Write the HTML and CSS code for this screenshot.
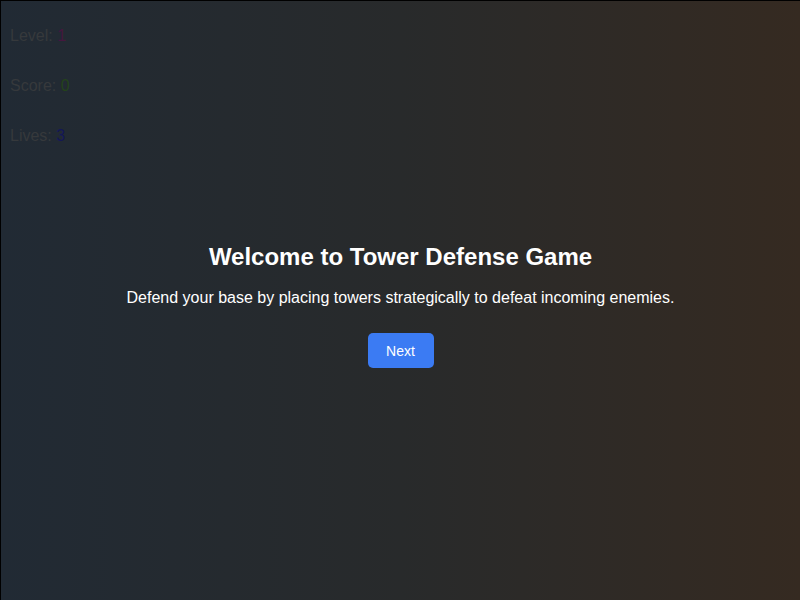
FILE: index.html
```html
<!DOCTYPE html>
<html lang="en">
<head>
<meta charset="utf-8">
<title>Tower Defense Game</title>
<link rel="stylesheet" href="styles.css">
</head>
<body>
<div class="screen">
  <div class="stats">
    <p class="stat">Level: <span class="v-level">1</span></p>
    <p class="stat">Score: <span class="v-score">0</span></p>
    <p class="stat">Lives: <span class="v-lives">3</span></p>
  </div>
  <div class="intro">
    <h1 class="title">Welcome to Tower Defense Game</h1>
    <p class="desc">Defend your base by placing towers strategically to defeat incoming enemies.</p>
    <button class="next">Next</button>
  </div>
</div>
</body>
</html>
```
FILE: styles.css
```css
html, body {
  margin: 0;
  padding: 0;
  height: 100%;
  overflow: hidden;
}
body {
  font-family: "Liberation Sans", Arial, sans-serif;
}
.screen {
  box-sizing: border-box;
  width: 800px;
  height: 600px;
  border-top: 1px solid #000;
  border-left: 1px solid #000;
  background: linear-gradient(to right, #212a34 0%, #282a2b 50%, #352a21 100%);
  display: flex;
  flex-direction: column;
}
.stats {
  padding: 26px 9px 0;
}
.stat {
  margin: 0 0 32px;
  font-size: 16px;
  line-height: 18px;
  color: #36393c;
}
.v-level { color: #45173f; }
.v-score { color: #24431a; }
.v-lives { color: #141758; }
.intro {
  margin-top: 66px;
  display: flex;
  flex-direction: column;
  align-items: center;
  color: #fff;
}
.title {
  margin: 0;
  font-size: 24px;
  line-height: 28px;
  font-weight: bold;
}
.desc {
  margin: 18px 0 0;
  font-size: 16px;
  line-height: 18px;
}
.next {
  margin-top: 26px;
  width: 66px;
  height: 35px;
  border: none;
  border-radius: 5px;
  background: #3b7bf3;
  color: #fff;
  font-family: "Liberation Sans", Arial, sans-serif;
  font-size: 14px;
  padding: 0;
}
```
